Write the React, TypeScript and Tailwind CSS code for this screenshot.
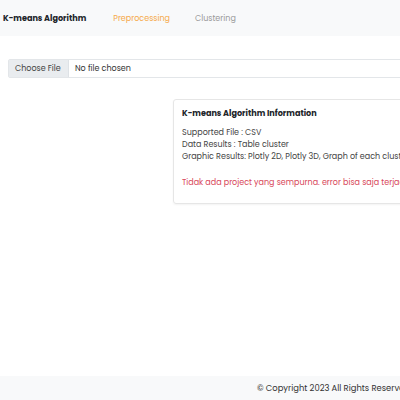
export default function App() {
  return (
    <div className="w-[400px] h-[400px] overflow-hidden bg-white flex flex-col text-[#333]" style={{ fontFamily: '"Poppins", "Open Sans", sans-serif' }}>
      <nav className="h-[36px] shrink-0 bg-[#f8f9fa] flex items-center whitespace-nowrap text-[8px] pt-[1px]">
        <span className="ml-[3px] font-bold text-[#212529] text-[8.1px]">K-means Algorithm</span>
        <span className="ml-[27px] text-[#f6a94a]">Preprocessing</span>
        <span className="ml-[25px] text-[#9a9a9a]">Clustering</span>
      </nav>
      <div className="mt-[23px] ml-[8px] w-[420px] h-[19px] flex border border-[#e3e6e9] rounded-[2px] text-[8px] whitespace-nowrap">
        <div className="w-[60px] bg-[#e9ecef] border-r border-[#dee2e6] flex items-center pl-[6px] text-[#444]">Choose File</div>
        <div className="flex items-center pl-[6px] text-[#333]">No file chosen</div>
      </div>
      <div className="mt-[21px] ml-[173px] w-[260px] h-[105px] border border-[#e6e6e6] rounded-[3px] shadow-[0_1px_2px_rgba(0,0,0,0.05)] px-[8px] pt-[7px] text-[8px] whitespace-nowrap">
        <div className="font-bold text-[#212529] text-[8.1px] leading-[12px]">K-means Algorithm Information</div>
        <div className="mt-[8px] leading-[12px] text-[#444]">
          <div>Supported File : CSV</div>
          <div>Data Results : Table cluster</div>
          <div>Graphic Results: Plotly 2D, Plotly 3D, Graph of each cluster</div>
        </div>
        <div className="mt-[14px] leading-[12px] text-[#d8485a]">Tidak ada project yang sempurna. error bisa saja terjadi</div>
      </div>
      <div className="flex-1" />
      <footer className="h-[24px] shrink-0 bg-[#f8f9fa] flex items-center pl-[257px] whitespace-nowrap text-[8.4px] text-[#333]">
        © Copyright 2023 All Rights Reserved
      </footer>
    </div>
  );
}
